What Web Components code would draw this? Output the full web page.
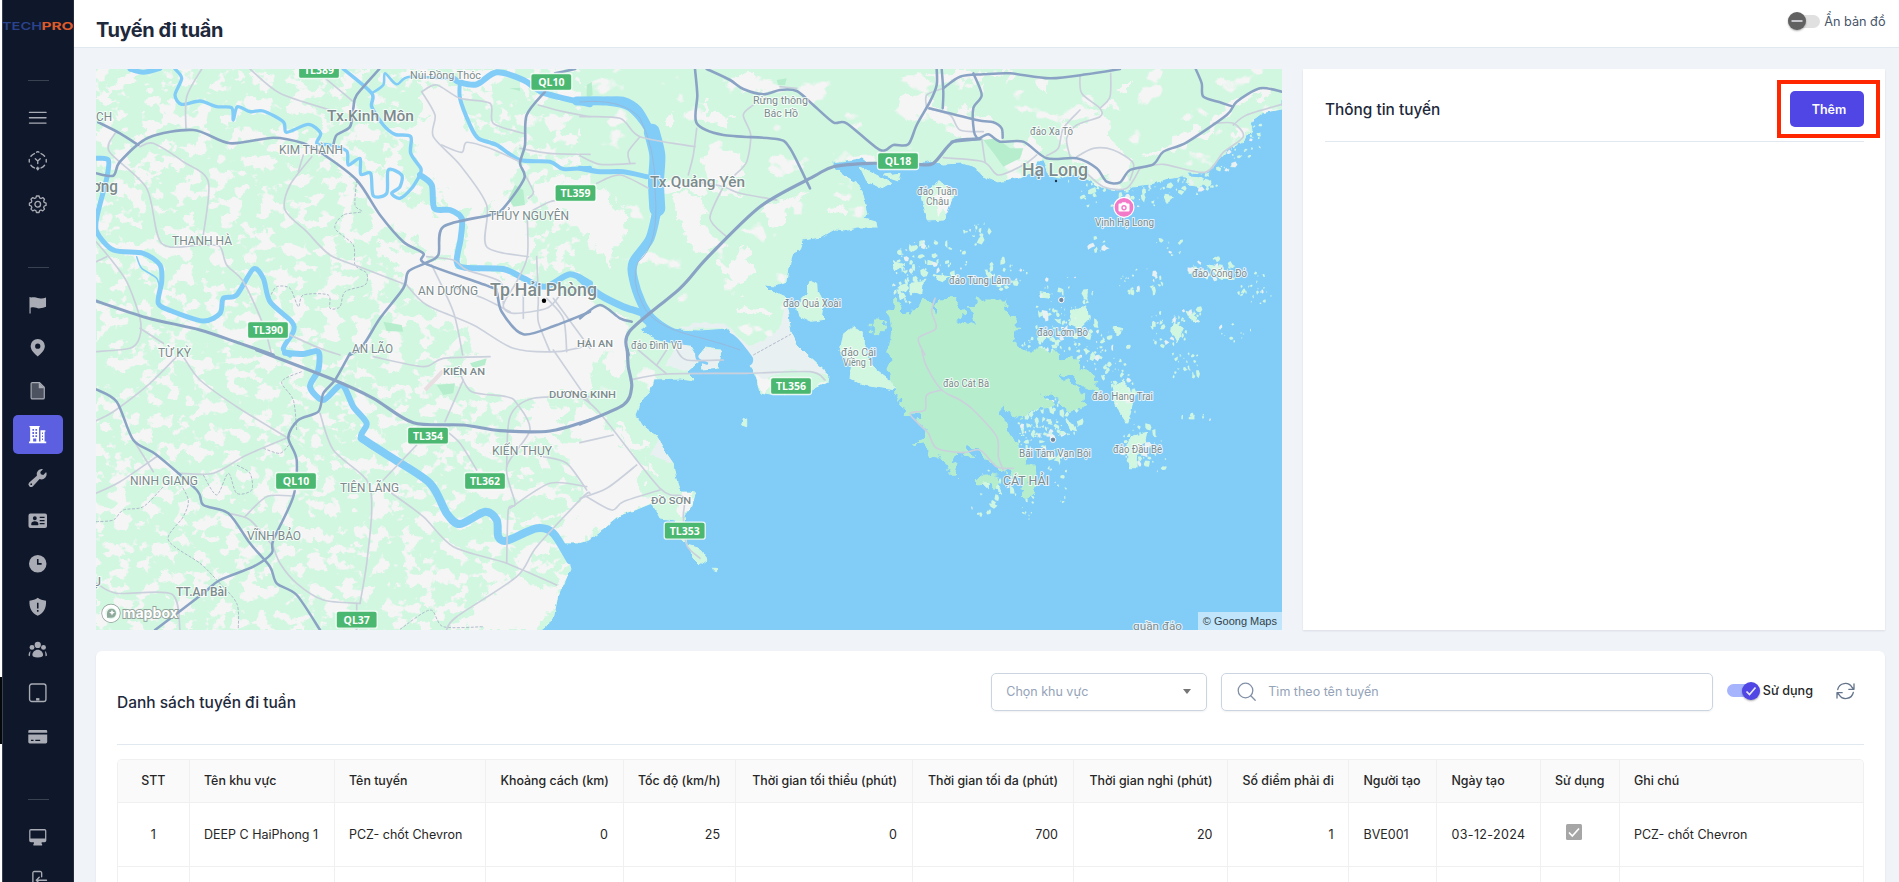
<!DOCTYPE html>
<html lang="vi">
<head>
<meta charset="utf-8">
<title>Tuyến đi tuần</title>
<style>
html,body{margin:0;height:100%;overflow:hidden;background:#f0f4f9;font-family:Inter,"Noto Sans",sans-serif;color:#1e293b}
</style>
</head>
<body>
<patrol-app></patrol-app>
<script>
const define=(name,html,setup)=>{
  const t=document.createElement('template');t.innerHTML=html;
  customElements.define(name,class extends HTMLElement{
    constructor(){super();this.attachShadow({mode:'open'}).append(t.content.cloneNode(true));}
    connectedCallback(){if(setup&&!this.ready){this.ready=true;setup(this,this.shadowRoot);}}
  });
};

/* ---------- sidebar ---------- */
const ICONS={
  menu:'<path d="M1.500 4.500h17M1.500 10h17M1.500 15.500h17" class="l"/>',
  scan:'<path d="M6.600 2.600A8 8 0 0 0 3 5.400M1.300 8.600v2.800M3 14.600a8 8 0 0 0 3.600 2.800M13.400 2.600A8 8 0 0 1 17 5.400M18.700 8.600v2.800M17 14.600a8 8 0 0 1-3.600 2.800M8.800 1.200L10 .6l1.200.6M8.800 17.600l1.200 1.600 1.200-1.600M10 16.600v2M7.500 8l2.500 2.200L12.500 8M10 10.200v2.600" class="l" stroke-width="1.500"/>',
  gear:'<path d="M10 1.500l1.400.2.600 2 1.500.7 1.900-1 1.900 1.900-.9 1.900.6 1.500 2 .7v2.400l-2 .7-.6 1.500.9 1.900-1.900 1.900-1.900-1-1.500.7-.6 2H8.600l-.6-2-1.500-.7-1.900 1-1.900-1.900.9-1.900L3 12.500l-2-.7V9.400l2-.7.6-1.500-.9-1.900 1.900-1.900 1.900 1L8 3.700l.600-2z" class="l" transform="translate(.5 -.6) scale(.95)"/><circle cx="10" cy="9.500" r="2.900" class="l"/>',
  flag:'<path d="M1.500 2v17h1.200v-5.800c4-1.600 6.300.9 9.500.5 2.500-.2 4.300-.9 6.300-1.600V2.600c-2.500 1-4.500 1.300-7 .8C8 2.600 5.500 1.600 2.700 2.800V2z"/>',
  pin:'<path fill-rule="evenodd" d="M10 1a7.300 7.300 0 0 0-7.300 7.300c0 4.500 4.500 8.500 7.300 10.700 2.800-2.200 7.300-6.200 7.300-10.700A7.300 7.300 0 0 0 10 1zm0 4.700a2.700 2.700 0 1 1 0 5.400 2.700 2.700 0 0 1 0-5.400z"/>',
  file:'<path d="M4.500 1.600h7.300L16.700 6.500v10.600a1.300 1.300 0 0 1-1.300 1.300H4.500a1.300 1.300 0 0 1-1.300-1.300V2.900a1.300 1.300 0 0 1 1.300-1.300z" fill-opacity=".4" stroke="currentColor" stroke-width="1.200"/><path d="M11 1.600v5.900h6z"/>',
  building:'<path fill-rule="evenodd" d="M1.500 1H12v1.300h-.7V17h1.500V5.500h5V7H17v10h1.700v1.600H1V17h1.200V2.300h-.7zM4.500 4v2h1.700V4zm3.100 0v2h1.700V4zM4.500 7.300v2h1.700v-2zm3.100 0v2h1.700v-2zM4.500 10.600v1.700h1.700v-1.700zm3.100 0v1.700h1.700v-1.700zM5.300 13.800V17h3.200v-3.200zm9.100-6v1.500h1V7.800zm0 3v1.500h1v-1.500zm0 3v1.500h1v-1.500z"/>',
  wrench:'<path fill-rule="evenodd" d="M18.600 4.200l-2.900 2.900-2.500-.6-.6-2.400 2.800-2.900a5.300 5.300 0 0 0-6.300 6.800L1.300 14.800a2.600 2.600 0 0 0 3.800 3.800l6.800-7.300a5.300 5.300 0 0 0 6.700-7.100zM3.300 15.700a.9.900 0 1 1 0 1.800.9.900 0 0 1 0-1.800z"/>',
  id:'<path fill-rule="evenodd" d="M2.500 2.500h15a2 2 0 0 1 2 2v11a2 2 0 0 1-2 2h-15a2 2 0 0 1-2-2v-11a2 2 0 0 1 2-2zM7 5.500a2 2 0 1 0 0 4 2 2 0 0 0 0-4zM3.300 13.500c0 .7.300 1 1 1h5.400c.700 0 1-.3 1-1 0-1.900-1.600-2.900-3.700-2.900s-3.700 1-3.700 2.900zM12 6v1.300h5V6zm0 3.200v1.300h5V9.200zm0 3.200v1.300h5v-1.300z"/>',
  clock:'<path fill-rule="evenodd" d="M10 1a9 9 0 1 0 0 18 9 9 0 0 0 0-18zm-.8 4v5.900H14V9.300h-3.200V5z"/>',
  shield:'<path fill-rule="evenodd" d="M10 .8c2.500 1.900 5 2.700 8.500 3 .5 8-2.800 13-8.500 15.400C4.300 16.800 1 11.800 1.500 3.800 5 3.500 7.500 2.700 10 .8zM9.200 6v5.800h1.600V6zm0 7.300V15h1.600v-1.700z"/>',
  users:'<circle cx="10" cy="5" r="3.200"/><circle cx="4.100" cy="7.600" r="2.500"/><circle cx="15.900" cy="7.600" r="2.500"/><path d="M4.500 15.500c0-3 2.400-5.500 5.500-5.500s5.500 2.500 5.500 5.500c0 1.700-1.600 2.500-5.500 2.500s-5.500-.8-5.500-2.500zM2.600 11.300c-1.300.8-2 2.600-2 4.300 0 .5.500.9 1.400 1 .1-2 .3-3.600.6-5.300zM17.400 11.300c1.300.8 2 2.600 2 4.300 0 .5-.5.900-1.400 1-.1-2-.3-3.600-.6-5.300z"/>',
  tablet:'<rect x="1.600" y="1" width="16.800" height="18" rx="2.300" class="l" stroke-width="1.600"/><path d="M8.300 15.500h3.400V18H8.300z"/>',
  card:'<path d="M1.500 3h17a1.200 1.200 0 0 1 1.200 1.200V6H.3V4.200A1.200 1.200 0 0 1 1.500 3z"/><path fill-rule="evenodd" d="M.3 7.800h19.400v7.500a1.500 1.500 0 0 1-1.500 1.500H1.800a1.500 1.500 0 0 1-1.500-1.500zM3 13.200v1.200h2.700v-1.200zm4.500 0v1.200h5v-1.200z"/>',
  monitor:'<path transform="translate(0 .6)" fill-rule="evenodd" d="M3 1.500h14a1.800 1.800 0 0 1 1.800 1.800v10a1.800 1.800 0 0 1-1.800 1.800h-3v1.800h.5v1.600h-9v-1.600H6v-1.800H3a1.800 1.800 0 0 1-1.800-1.800v-10A1.800 1.800 0 0 1 3 1.500zm-.5 1.600v8.200h15V3.100z"/>',
  exit:'<path d="M14 7V3a1.500 1.500 0 0 0-1.500-1.500h-6A1.500 1.500 0 0 0 5 3v15M19 10.500H8.500l3-3M8.500 10.500l3 3" class="l" stroke-width="1.600"/>'
};
define('nav-item',`<style>
:host{display:flex;align-items:center;justify-content:center;width:50px;height:39px;margin:0 auto 4.150px;border-radius:5px;color:#a9acb4;flex:none}
:host([active]){background:#5b5fe0;color:#fff}
svg{width:19.500px;height:19.500px;fill:currentColor;overflow:visible}
.l{fill:none;stroke:currentColor;stroke-width:1.400;stroke-linecap:round;stroke-linejoin:round}
</style><svg viewBox="0 0 20 20"></svg>`,(el,r)=>{r.querySelector('svg').innerHTML=ICONS[el.getAttribute('icon')];});

define('side-bar',`<style>
:host{display:flex;flex-direction:column;box-sizing:border-box;width:74px;height:882px;background:#0f172a;border-left:2px solid #fff;overflow:hidden;flex:none;box-shadow:inset 1px 0 #3a4050,inset -1px 0 #262c3c;position:relative}
.logo{display:block;width:72px;height:14px;margin-top:19px;flex:none}
hr{width:21px;border:0;height:1px;background:#3a4150;margin:0 auto;flex:none}
.gap{flex:none}
</style>
<svg class="logo" viewBox="0 0 72 14"><text x="0" y="11" font-size="11" font-weight="600" font-family="Inter" fill="#2b438c" textLength="40" lengthAdjust="spacingAndGlyphs">TECH</text><text x="39.500" y="11" font-size="11" font-weight="700" font-family="Inter" fill="#dd5a2b" textLength="32" lengthAdjust="spacingAndGlyphs">PRO</text></svg>
<hr style="margin-top:47px">
<div class="gap" style="height:17.500px"></div>
<nav-item icon="menu"></nav-item><nav-item icon="scan"></nav-item><nav-item icon="gear"></nav-item>
<hr style="margin-top:39px">
<div class="gap" style="height:17.500px"></div>
<nav-item icon="flag"></nav-item><nav-item icon="pin"></nav-item><nav-item icon="file"></nav-item><nav-item icon="building" active></nav-item><nav-item icon="wrench"></nav-item><nav-item icon="id"></nav-item><nav-item icon="clock"></nav-item><nav-item icon="shield"></nav-item><nav-item icon="users"></nav-item><nav-item icon="tablet"></nav-item><nav-item icon="card"></nav-item>
<hr style="margin-top:39px">
<div class="gap" style="height:17.500px"></div>
<nav-item icon="monitor"></nav-item><nav-item icon="exit"></nav-item>`);

/* ---------- switch ---------- */
define('toggle-switch',`<style>
:host{display:flex;align-items:center;gap:4px;font-size:13px;--thumb:#616161;--track:#e0e0e0}
:host([on]){--thumb:#4f46e5;--track:#a5b4fc}
.t{width:32px;height:18px;display:flex;align-items:center;position:relative}
.t::before{content:"";flex:1;height:13px;border-radius:7px;background:var(--track)}
svg{position:absolute;left:0;top:0;width:18px;height:18px;border-radius:50%;background:var(--thumb);box-shadow:0 1px 2px #0005}
:host([on]) svg{left:15px}
path{fill:none;stroke:#e8e8f0;stroke-width:1.700}
.c{display:none}:host([on]) .c{display:block}:host([on]) .m{display:none}
</style><div class="t"><svg viewBox="0 0 18 18"><path class="m" d="M3.500 9h11"/><path class="c" d="M4.500 9.500l3 3 6-7"/></svg></div><slot></slot>`);

define('page-header',`<style>
:host{display:flex;flex:none;box-sizing:border-box;height:48px;background:#fff;border-bottom:1px solid #e2e8f0;padding:0 13.500px 0 22px;justify-content:space-between}
h1{margin:15px 0 0;font-size:20px;line-height:30px;font-weight:700;letter-spacing:-.42px;color:#1e293b;white-space:nowrap}
toggle-switch{height:42px;color:#475569;gap:4px;font-size:12.700px}
</style><h1><slot></slot></h1><toggle-switch>Ẩn bản đồ</toggle-switch>`);

/* ---------- map ---------- */
const ORIGIN={A:[90,65],B:[90,350],C:[580,65],D:[580,350],E:[900,65],F:[900,350]};
const pts=(k,s)=>s.trim().split(/\s+/).map(p=>p.split(',').map(Number)).map(([x,y])=>[ORIGIN[k][0]+x/3,ORIGIN[k][1]+y/3]);
const curve=p=>{
  let d='M'+p[0].map(n=>n.toFixed(1));
  for(let i=0;i<p.length-1;i++){
    const a=p[i-1]||p[i],b=p[i],c=p[i+1],e=p[i+2]||c,q=7;
    d+='C'+[b[0]+(c[0]-a[0])/q,b[1]+(c[1]-a[1])/q,c[0]-(e[0]-b[0])/q,c[1]-(e[1]-b[1])/q,c[0],c[1]].map(n=>n.toFixed(1)).join(' ');
  }
  return d;
};
const lines=(list,attrs)=>list.map(([k,s,w])=>s.split('|').map(x=>`<path d="${curve(pts(k,x))}" ${attrs} ${w?`stroke-width="${w}"`:''}/>`).join('')).join('');
const areas=(list,attrs)=>list.map(([k,s])=>s.split('|').map(x=>`<polygon points="${pts(k,x).map(p=>p.map(n=>n.toFixed(1))).join(' ')}" ${attrs}/>`).join('')).join('');

const LAND='96,69 1282,69 1282,109 1262,113 1250,122 1252,130 1243,142 1230,148 1217,162 1205,173 1187,172 1180,177 1165,179 1150,185 1133,187 1127,191 1103,188 1085,178 1074,174 1060,178 1050,176 1044,160 1038,160 1034,172 1020,178 997,182 983,176 975,167 962,163 943,164 930,160 913,165 896,167 884,160 868,163 862,158 833,162 833,166 847,178 858,184 862,195 867,213 864,218 877,221 878,228 857,228 848,230 834,229 820,237 803,240 800,250 793,253 790,262 787,282 776,286 765,285 772,292 785,298 788,315 791,332 797,345 807,355 818,365 829,375 828,382 813,389 790,392 770,395 760,393 757,380 753,370 743,356 735,340 727,328 700,330 677,329 650,322 640,330 655,340 667,343 690,346 697,358 705,348 720,350 718,368 702,370 701,360 696,364 687,372 695,380 680,378 653,379 650,390 640,405 636,415 642,425 656,436 664,450 673,463 676,480 680,492 690,492 695,493 692,505 684,517 688,545 698,548 707,560 700,565 693,558 690,548 682,540 675,520 660,518 652,503 635,510 620,515 600,532 590,540 578,543 563,543 571,568 565,582 557,600 553,620 540,630 96,630';
const URBAN=[
 ['A','870,530 960,570 1100,600 1240,640 1380,680 1500,690 1500,870 1150,870 1130,790 1040,740 1000,720 950,640 930,600 880,575|850,400 920,410 1030,440 1100,470 1095,580 1000,545 900,470|990,60 1110,100 1150,220 1280,290 1240,400 1190,430 1080,420 1035,340 990,300 960,210 1020,150|1200,450 1300,440 1320,560 1280,600 1130,595 1130,480|700,260 860,330 960,340 870,450 800,350|1110,12 1220,15 1200,80 1130,70|1330,360 1500,330 1500,470 1380,430'],
 ['B','1150,0 1500,0 1500,130 1270,145 1150,120 1110,70|1430,300 1500,285 1500,572 1425,577 1390,545 1480,440|1290,200 1420,180 1400,260 1270,280|1240,690 1390,720 1350,838 1120,838'],
 ['C','0,400 70,385 130,440 135,530 90,540 95,600 50,540 0,500|290,400 360,395 380,480 420,540 370,560 330,540|410,600 460,600 480,550 520,620 470,655 420,625|540,440 670,390 600,455 570,475|740,430 790,420 790,440|230,360 470,360 500,390 430,380 240,370|400,260 450,255 500,310 380,340 370,290|0,720 60,720 140,770 140,870 0,870|470,715 520,720 570,745 550,755 500,740|360,120 440,165 430,180 370,140|1180,20 1200,12 1200,60|245,170 275,155 270,180 255,185|450,45 540,40 560,80 500,70|945,110 1040,95 1030,140 980,140'],
 ['D','0,150 60,200 190,360 170,420 210,455 120,495 0,577|80,30 140,0 110,80 80,70|110,220 190,290 150,300|200,330 220,340 215,380|535,80 590,82 560,133 540,128|300,430 345,430 335,465 300,500|0,0 80,0 40,30 0,60'],
 ['E','0,105 80,90 100,130 200,150 310,190 320,225 240,222 150,180 60,135|480,200 600,150 660,270 700,300 650,350 600,330 500,260|340,235 380,235 430,280 400,300|420,60 450,55 430,75|660,60 690,55 680,70|80,50 180,20 330,30 180,45|730,270 850,230 1000,110 1110,75 990,145 850,245|640,110 670,125 620,125']
];
const RIVERS=[
 ['A','120,12 160,22 210,10',5],
 ['A','255,12 275,40 255,90 275,118 330,108 380,125 425,128 430,165 442,125 480,140 520,138 580,170 590,202 655,178 692,205 680,235 720,240 770,258 775,300 810,280 812,328 842,325 850,392 890,385 895,315 935,330 930,365 905,385 930,400 965,370 990,330',3.3],
 ['A','760,12 845,85 845,125 880,180 915,208 962,215 962,265 992,310 990,330',3.5],
 ['A','990,330 1025,360 1033,430 1080,435 1115,460 1112,520 1100,590 1125,608 1240,612 1300,640 1365,665 1440,628 1500,655',6],
 ['C','0,640 60,690 130,725 200,750 280,800 420,830',7],
 ['A','845,85 880,60 885,25 920,58 960,35 1110,45',2.5],
 ['A','1090,40 1110,52 1160,58 1220,22 1300,45 1365,85 1500,118',6],
 ['C','-10,108 80,108 150,125 205,190 225,270',9],['C','75,100 130,100 180,130 215,190',3],
 ['C','215,200 232,270 228,350 232,430',16],['C','232,430 210,520 160,590 160,640 185,715 220,770',9],
 ['C','200,755 260,805 330,822 440,820 500,885',13],
 ['A','1110,50 1110,100 1140,180 1165,220 1220,240 1290,285 1380,290 1420,312 1500,308',4],
 ['C','0,310 60,320 130,320 200,335',5],
 ['A','18,280 55,285 50,340 22,450 20,500 70,555 160,565 210,600 215,650 205,715 250,740 340,768 390,745 400,700 440,690 490,612 520,640 540,710 605,770 610,800 580,850 600,870',5],
 ['A','140,575 155,610 200,640 210,680',1.5],
 ['B','585,8 640,12 685,5 685,60 660,110 700,150 755,105 790,170 830,220 815,265 900,320',6],
 ['B','815,265 900,320 1020,400 1070,490 1110,522 1185,485 1220,510 1225,560 1250,572 1340,535 1390,550 1440,630',8],
 ['D','350,-20 352,25 380,40',3]
];
const MAJOR=[
 ['A','18,325 70,332 90,290 175,218 310,195 420,235 550,218 640,235 700,268 800,345 870,450 940,530 1000,565 1005,595 1200,665 1220,680 1235,740 1300,808 1400,780 1500,740|25,172 90,205 145,240|868,12 800,90 790,130 780,185 740,210 730,240|1365,80 1310,150 1305,240 1290,295 1303,340 1240,430 1200,450 1060,485 1045,570 1005,595 955,620 940,670 870,760 820,840 780,870|1455,12 1395,25',2.6],
 ['A','18,708 170,758 330,795 450,835 550,870',3],
 ['B','780,10 735,90 700,130 685,185 625,210 595,262 620,330 610,440 550,570 545,610 490,650 390,690 340,730 195,840|18,118 80,155 130,270 200,315 320,420 340,465 415,490 480,580 540,650 560,700 620,735 690,840',2.5],
 ['B','500,0 720,85 850,145 970,218 1120,225 1230,242 1380,243 1500,210',3.2],
 ['D','0,222 130,165 155,110 145,50 142,0',3.2],
 ['C','145,870 148,800 300,670 380,580 540,425 700,335 760,305 870,295 1010,298 1060,295 1120,230 1200,222',3.2],
 ['C','155,770 120,760 60,720 0,760|345,12 352,90 350,175 430,210 590,222 630,250 690,370|380,12 450,45 490,72 550,88 600,75 650,78 700,120 760,172 800,175 900,255 940,240 985,238 1010,180 1050,110 1070,60 1070,12',2.6],
 ['E','125,12 130,80 128,130|88,130 230,165 280,172 305,190 308,218|130,70 180,35 250,28 330,25 450,40 560,28 660,12|220,25 245,90 220,130 222,200 232,220|155,230 230,222 265,208 300,230 370,230 440,280 530,280 590,310 620,350 660,352 690,315 760,298 790,260 860,232 980,150 1010,110 1080,70 1146,80|887,12 905,55 910,95 960,112 998,125',2.5]
];
const MINOR=[
 ['A','335,12 290,95 288,195|480,12 570,85 720,135|700,35 790,110|75,205 58,260 170,370 215,535 340,540 390,545 410,600 460,650 520,780 545,870|150,245 190,235 280,290 355,350 340,510|18,530 60,580 110,650 150,760 148,820 120,850 18,860|18,590 50,575|150,790 220,835|665,275 600,360 585,435 650,500 720,570 820,610 950,660|640,270 625,320|995,80 1035,150 1030,215 1110,300 1190,420 1190,545 1315,575|1315,400 1330,380 1300,320|995,80 1040,60 1110,100 1200,115 1210,175 1300,205|1055,240 1115,262 1130,232 1200,250 1290,290|1290,250 1380,265 1500,268|1345,120 1420,140 1500,155|600,810 690,850 750,870|1025,600 1090,740 1118,870|1330,435 1380,410 1420,405'],
 ['A','950,660 1010,720 1150,780 1270,850 1400,860 1500,840|1010,575 1090,585 1130,615 1230,650 1240,715|1312,460 1312,575 1280,650 1240,720 1270,745 1370,730 1410,690|1340,575 1345,700 1345,770 1380,860|1370,700 1420,760 1430,860|1390,700 1500,850|1100,670 1180,700 1260,740|1300,690 1300,760',2.4],
 ['B','280,20 330,90 440,170 595,265|265,15 180,100 70,185 18,212|130,270 190,365|18,430 90,395 200,320|270,370 370,370 470,315 600,260|690,190 730,300 830,390 845,480 830,640 810,760|880,390 980,285|905,430 1000,500 1090,590 1250,640 1400,705|1250,640 1255,480 1275,460 1250,350 1320,240 1280,160 1250,140 1145,125 1110,70|1120,90 1065,215|1065,240 1110,280 1160,360|1250,350 1260,200 1330,145 1500,140|1260,475 1380,400 1490,410|1360,320 1430,340 1490,420|20,700 80,730 245,732 270,840|465,500 530,440 610,438|850,20 1000,50 1060,25 1200,20'],
 ['B','810,760 700,750 620,700 570,640 550,590|415,490 480,510 550,590|1070,838 1100,800 1280,680 1340,590 1480,440 1500,430|1390,0 1500,160|800,760 800,840',2.8],
 ['D','0,140 60,190 240,415 310,440 310,500 320,585 360,625|170,345 80,415 0,445|150,90 260,72 500,70 690,65 735,90',2.8],
 ['D','0,278 100,255|20,440 95,480 130,455 240,420|175,0 260,72 |290,0 320,30 430,30|230,45 260,0'],
 ['C','0,155 120,160 180,215 345,245|350,190 340,270 325,330|430,365 390,460 440,515|520,120 490,150 512,210 500,290 465,330|180,215 145,260 150,295|0,272 60,298 165,295|50,355 120,330 205,370|600,65 650,70'],
 ['C','350,350 430,365 480,385 590,405',2.6],
 ['E','80,130 150,150 180,195 250,200|540,30 545,85 600,130 600,155 530,180 500,220 510,275|632,25 630,95 600,130|540,135 490,190 475,250 440,272|530,275 580,250 640,255 700,295 690,345|245,220 255,290|720,310 790,298 915,322 970,262 1030,215 1000,175 940,175|1000,180 1040,150 1146,118|130,70 80,90 80,130'],
 ['E','130,278 250,290 295,330 370,300 410,270|555,320 610,365 680,370 720,310',2.8],
 ['E','105,700 95,740 108,790 55,820 75,870'],
 ['F','65,0 80,50 125,120 180,150 220,180 290,260 295,320 310,360|125,120 80,135 75,180 30,190 55,220 85,250 110,295 190,308 240,300 290,350 340,355']
];
const DASHED=[
 ['A','800,345 795,420 815,440 760,450 735,490 790,540 795,600 830,625 825,660 765,680 750,725 720,730 715,690 640,690 625,725 600,670 560,665 540,695'],
 ['B','635,65 575,95 610,150 620,240|18,515 70,510 100,480 160,470 220,410|265,390 295,450 280,500 235,570 330,640 380,690 440,760 445,838|340,375 380,435 415,370 440,430 485,420 480,370 440,345|520,295 570,310 600,280|930,838 1020,780 1060,830 1180,830'],
 ['C','520,870 632,808']
];
const FOREST=[
 ['E','-18,710 30,745 75,705 105,745 120,705 145,700 180,705 190,750 175,760 235,785 205,730 250,705 310,705 320,730 350,770 340,830 360,870 400,870 420,900 440,1010 460,1020 430,1030 370,1050 340,1060 315,1030 300,1005 305,1060 330,1100 365,1150 375,1200 405,1200 410,1260 385,1300 355,1290 380,1250 330,1220 290,1205 260,1180 240,1155 205,1150 215,1180 190,1165 170,1170 160,1200 175,1245 150,1220 130,1180 95,1170 50,1130 75,1100 60,1060 25,1045 -20,970 -30,930 -35,870 -25,800 -30,750'],
 ['F','350,0 470,0 480,25 530,30 535,60 590,70 595,110 600,125 540,110 530,80 480,70 490,95 530,110 555,170 510,190 470,140 430,120 425,70 400,50 370,40|230,380 290,375 295,400 270,410 240,400'],
 ['C','880,765 920,765 905,800 880,800']
];
const WOODS=[
 ['E','250,225 290,220 330,250 370,250 360,280 310,305 285,270'],
 ['A','1255,400 1275,360 1300,375 1305,420 1270,425|880,770 935,780 940,800 890,798|1258,70 1290,68 1290,78'],
 ['B','1040,105 1095,100 1090,130 1060,135|1140,40 1190,25 1185,45 1150,55'],
 ['C','20,60 35,50 38,90 20,100|590,45 620,40 615,60 595,60']
];
const ISLES=[
 ['C','840,305 870,320 935,355 905,372 860,348|910,330 960,325 955,345|1025,400 1045,370 1080,350 1125,385 1100,430 1095,465 1045,468|690,645 710,655 712,680 730,715 725,750 735,765 695,772 660,755 650,720 680,690|790,810 820,785 850,800 850,840 865,870 870,900 930,945 945,975 850,960 810,940 815,900 780,860|940,590 975,600 950,615|990,655 1030,650 1025,690 990,680|1060,630 1110,635 1090,650'],
 ['D','490,205 500,210 500,230 485,225|398,655 410,655 410,665 400,663'],
 ['F','640,110 670,95 690,110 700,150 690,190 680,220 660,190 645,155|690,260 740,250 735,275 710,300 708,350 690,350 680,300|500,205 525,230 530,245 510,240|270,390 285,390 305,430 290,420|240,395 265,400 265,420'],
 ['E','420,680 450,685 445,700 425,695|510,740 550,725 570,760 540,790 510,780|820,770 850,790 830,830 815,800|920,600 960,605 1000,640 960,640|860,335 910,340 900,365 870,360|790,390 820,395 800,412|855,735 890,755 885,770 865,755|640,785 665,790 660,805 640,800']
];
/* islet fields: centre x, centre y, radius x, radius y, count */
const CLUSTERS=[[930,262,38,22,70],[905,285,12,20,26],[978,234,14,12,18],[1005,275,22,16,26],[1065,300,30,25,36],[1065,330,34,24,70],[1040,350,22,16,44],[1085,190,22,16,14],[1150,190,25,14,24],[1195,182,25,12,38],[1245,135,18,24,38],[1225,160,16,12,20],[1130,205,30,10,10],[1100,245,12,10,9],[1170,248,18,9,10],[1140,282,24,14,24],[1215,270,28,13,40],[1255,290,18,18,26],[1170,328,22,20,36],[1190,315,12,9,10],[1235,332,16,10,10],[1185,365,16,18,24],[1195,418,16,7,7],[1115,375,14,18,28],[1128,400,12,22,20],[1140,442,22,24,42],[1160,465,10,8,5],[1050,418,34,22,90],[1035,435,18,15,30],[1050,455,14,15,16],[1062,485,8,18,9],[1000,475,18,20,20],[985,505,16,13,9],[1025,505,14,15,11],[945,448,14,18,14],[1110,345,24,14,14],[1093,360,20,20,18]];
let seed=7;const rnd=()=>(seed=(seed*16807)%2147483647)/2147483647;
const islets=()=>CLUSTERS.map(([cx,cy,rx,ry,n])=>{
  let s='';
  for(let i=0;i<n;i++){
    const t=rnd()*6.283,q=Math.sqrt(rnd()),x=cx+Math.cos(t)*q*rx,y=cy+Math.sin(t)*q*ry,z=.8+rnd()*rnd()*4.6,m=5+Math.floor(rnd()*3),g=.4+rnd()*.9;
    let p='';for(let j=0;j<m;j++){const a=j/m*6.283,l=z*(.35+rnd()*.9);p+=(x+Math.cos(a)*l*g).toFixed(1)+','+(y+Math.sin(a)*l).toFixed(1)+' ';}
    s+=`<polygon points="${p}" fill="${rnd()>.15?'#cff6e0':'#e9f1f3'}"/>`;
  }
  return s;}).join('');
const LABELS=[
 ['CH',96,121,16,12],['Tx.Kinh Môn',327,121,87,15.5,1],['KIM THÀNH',279,153.500,64,12],['ơng',92,191.500,26,17,1],['THANH HÀ',172,245,60,12],['TỪ KỲ',158,357,33,12],['AN DƯƠNG',418,294.500,60,12],['Tp.Hải Phòng',490,295.500,107,18,1],['AN LÃO',352,353,41,12],['THỦY NGUYÊN',489,220,80,12],['Núi Đồng Thóc',410,79,71,10.5],['KIẾN AN',443,375,42,9.5,1],['DƯƠNG KINH',549,397.500,67,9.5,1],['KIẾN THỤY',492,455,60,12],['TIÊN LÃNG',340,492,59,12],['NINH GIANG',130,485,68,12],['VĨNH BẢO',247,540,54,12],['TT.An Bài',176,596,51,12,1],['Ụ',92,586,9,12],['HẢI AN',577,347,36,9.5,1],['đảo Đình Vũ',631,349,51,10],['Rừng thông',753,104,55,10.5],['Bác Hồ',764,117,34,10.5],['Tx.Quảng Yên',650,186.500,95,15.5,1],['đảo Quả Xoài',783,307,58,10],['đảo Tuần',917,195,40,10],['Châu',926,205,23,10],['Hạ Long',1022,176,66,18,1],['đảo Xa Tô',1030,135,43,10],['Vịnh Hạ Long',1095,225.500,59,10.5],['đảo Cống Đỏ',1192,277,55,10],['đảo Tùng Lâm',949,284,61,10],['đảo Lờm Bò',1037,336,51,10],['đảo Cái',841,356,35,10],['Viềng 1',843,366,30,10],['đảo Cát Bà',943,387,46,10],['đảo Hang Trai',1092,399.500,61,10],['đảo Đầu Bê',1113,452.500,49,10],['Bãi Tắm Vạn Bội',1019,457,72,10],['CÁT HẢI',1003,485,46,12],['ĐỒ SƠN',651,503.500,40,9.5,1],['quần đảo',1133,630,49,11]
];
const SHIELDS=[['TL389',319,70],['QL10',551.300,82],['TL359',575.500,193],['TL390',268,330],['TL354',428,435.700],['QL10',296,481],['TL362',485,481],['QL37',356.700,619.700],['QL18',898,161],['TL356',791,386],['TL353',684.700,530.700]];

define('map-view',`<style>
:host{display:block;position:relative;overflow:hidden;background:#82ccf8}
svg{display:block;width:100%;height:100%}
.credit{position:absolute;right:0;bottom:0;height:18px;padding:0 5px;background:#ffffff80;font:11px/18px "Liberation Sans",Arial,sans-serif;color:#333f48;white-space:nowrap}
text{font-family:Roboto,sans-serif}
.lb{fill:#7c8b8d;stroke:#fff;stroke-opacity:.8;stroke-width:2px;paint-order:stroke;stroke-linejoin:round}
.sh{fill:#fff;font:700 10.500px "Open Sans",sans-serif;text-anchor:middle}
</style><svg viewBox="96 69 1186 561" preserveAspectRatio="none"></svg><div class="credit">© Goong Maps</div>`,(el,r)=>{
  const noise=(id,f,cut,s)=>`<filter id="${id}" x="0" y="0" width="100%" height="100%" color-interpolation-filters="sRGB"><feTurbulence type="fractalNoise" baseFrequency="${f}" numOctaves="3" seed="${s}"/><feColorMatrix values="0 0 0 0 .961  0 0 0 0 .961  0 0 0 0 .961  18 0 0 0 ${-18*cut}"/></filter>`;
  const rough=(id,f,k,s)=>`<filter id="${id}" filterUnits="userSpaceOnUse" x="86" y="59" width="1206" height="581" color-interpolation-filters="sRGB"><feTurbulence type="fractalNoise" baseFrequency="${f}" numOctaves="2" seed="${s}"/><feDisplacementMap in="SourceGraphic" scale="${k}" xChannelSelector="R" yChannelSelector="G"/></filter>`;
  r.querySelector('svg').innerHTML=`<defs>${noise('dense','.062 .07',.525,11)}${noise('sparse','.03 .04',.66,5)}${rough('coast','.12',5,3)}${rough('jag','.11',16,8)}${rough('town','.07',26,4)}<clipPath id="land"><polygon points="${LAND}"/></clipPath></defs>
  <g filter="url(#coast)">
  <polygon points="${LAND}" fill="#d2f7e1" stroke="#d2f7e1"/>
  <path d="M80 55H1300V100H1282V69H96V630H540V645H80z" fill="#d2f7e1"/>
  <g clip-path="url(#land)">
   <rect x="96" y="69" width="484" height="561" filter="url(#dense)"/>
   <rect x="580" y="69" width="702" height="340" filter="url(#sparse)"/>
   <g filter="url(#town)">${areas(URBAN,'fill="#f5f5f5" stroke="#f5f5f5" stroke-width="3" stroke-linejoin="round"')}</g>
   <path d="M677 329L700 322 725 324 750 347 780 330 785 305 807 355 829 375 813 372 790 369 762 380 750 370 727 328zM660 436L650 455 673 463z" fill="#e9f0f1"/>
   <path d="M677 345L720 350 718 368 688 372 665 366z" fill="#e9f0f1"/>
  </g></g>
  ${areas(WOODS,'fill="#b6eecd"')}
  <g filter="url(#coast)">${areas(ISLES,'fill="#d2f7e1" stroke="#d2f7e1" stroke-width="1" stroke-linejoin="round"')}
  <path d="M935 196l14-8 2 14-4 12-3-6-6 8z" fill="#f5f5f5"/></g>
  ${islets()}
  <g filter="url(#jag)">${areas(FOREST,'fill="#b6eecd" stroke="#b6eecd" stroke-width="1" stroke-linejoin="round"')}</g>
  <g fill="none" stroke-linecap="round" stroke-linejoin="round">
   ${lines(RIVERS,'stroke="#82ccf8"')}
   ${lines(DASHED,'stroke="#a9b6c6" stroke-width=".9" stroke-dasharray="3 1.500" stroke-linecap="butt"')}
   <path d="M580 102Q622 98 640 118Q656 150 655 190Q660 245 638 262Q630 280 643 305Q652 325 690 335T740 350" stroke="#9ab4d4" stroke-width=".8"/>
   <path d="M425 390L443 371" stroke="#e8dfe2" stroke-width="4" stroke-linecap="butt"/>
   ${lines(MINOR,'stroke="#cbd1dc" stroke-width="1.700"')}
   ${lines(MAJOR,'stroke="#8aa3c4"')}
  </g>
  <circle cx="544" cy="300.700" r="2.200"/><circle cx="1056" cy="181" r="1.200" fill="#234"/>
  <circle cx="1061.300" cy="300" r="2.700" fill="#7189a0" stroke="#fff" stroke-width="1"/><circle cx="1053" cy="439.700" r="2.700" fill="#7189a0" stroke="#fff" stroke-width="1"/>
  <circle cx="1124" cy="207.300" r="10" fill="#f27ac9" stroke="#fff" stroke-width="1.200"/>
  <path fill-rule="evenodd" d="M1119.500 203.500h1.700l1-1.300h3.600l1 1.300h1.700q1 0 1 1v6q0 1-1 1h-9q-1 0-1-1v-6q0-1 1-1zM1124 205a2.700 2.700 0 1 0 0 5.400 2.700 2.700 0 0 0 0-5.400zm0 1.400a1.300 1.300 0 1 1 0 2.600 1.300 1.300 0 0 1 0-2.600z" fill="#fff"/>
  ${LABELS.map(([t,x,y,w,s,b])=>`<text class="lb" x="${x}" y="${y}" textLength="${w}" lengthAdjust="spacingAndGlyphs" font-size="${s}" font-weight="${b?500:400}">${t}</text>`).join('')}
  ${SHIELDS.map(([t,x,y])=>`<rect x="${x-20.500}" y="${y-8.500}" width="41" height="17" rx="2.500" fill="#4ab870" stroke="#fff" stroke-width="1.300" stroke-opacity=".85"/><text class="sh" x="${x}" y="${y+4}">${t}</text>`).join('')}
  <g><circle cx="111" cy="613.300" r="8.300" fill="#d2f7e1" fill-opacity=".4" stroke="#8b9c97" stroke-width="2.600"/><circle cx="111" cy="613.300" r="7.300" fill="none" stroke="#fff" stroke-width="3.200"/><path d="M107 617.800v-4.500a4.500 4.500 0 1 1 4.500 4.500z" fill="#8faa9d"/><path d="M112 609.800l.9 2 2 .9-2 .9-.9 2-.9-2-2-.9 2-.9z" fill="#fff"/>
  <text x="122.500" y="617.500" textLength="55.500" lengthAdjust="spacingAndGlyphs" style="font:700 14px Inter,sans-serif;fill:#fff;stroke:#94a59e;stroke-width:1.800;paint-order:stroke">mapbox</text></g>`;
});

/* ---------- right panel ---------- */
define('route-panel',`<style>
:host{display:block;box-sizing:border-box;background:#fff;padding:22px 21px 0 22px;box-shadow:0 1px 2px #0f172a1a}
.bar{display:flex;justify-content:space-between;align-items:center;height:36px;padding-bottom:14px;border-bottom:1px solid #e2e8f0}
h2{margin:0;font-size:15.400px;font-weight:500;color:#1e293b}
.b{position:relative}
button{display:block;width:74px;height:36px;border:0;border-radius:5px;background:#4f46e5;color:#fff;font:600 12.500px Inter,sans-serif;padding:0 0 0 4px}
.mark{position:absolute;left:-13px;top:-11px;width:95px;height:50px;border:4px solid #ff2600}
</style><div class="bar"><h2><slot></slot></h2><div class="b"><button>Thêm</button><div class="mark"></div></div></div>`);

/* ---------- list ---------- */
define('data-table',`<style>
:host{display:block}
table{width:1747px;table-layout:fixed;border-collapse:separate;border-spacing:0;border:1px solid #f0f0f0;border-bottom:0;border-radius:5px 5px 0 0;overflow:hidden;font-size:12.500px;color:#262626}
th,td{box-sizing:border-box;padding:0 14.500px;border-right:1px solid #f0f0f0;border-bottom:1px solid #f0f0f0;text-align:left;font-weight:400;white-space:nowrap}
th{height:43px;background:#fafafa;font-weight:500;font-size:12.400px;padding-bottom:1px}
td{height:64px}
th:last-child,td:last-child{border-right:0}
.r{text-align:right}.c{text-align:center}
.d{letter-spacing:.35px}
svg{display:block;width:16px;height:16px;margin:-6px 0 0 10.500px}
</style><table><colgroup></colgroup><thead><tr></tr></thead><tbody></tbody></table>`,(el,r)=>{
  const cols=[['STT',71.500,'c','1'],['Tên khu vực',145,'','DEEP C HaiPhong 1'],['Tên tuyến',151.500,'','PCZ- chốt Chevron'],['Khoảng cách (km)',137.500,'r','0'],['Tốc độ (km/h)',112,'r','25'],['Thời gian tối thiểu (phút)',177,'r','0'],['Thời gian tối đa (phút)',161,'r','700'],['Thời gian nghỉ (phút)',154.500,'r','20'],['Số điểm phải đi',121,'r','1'],['Người tạo',88,'','BVE001'],['Ngày tạo',103.500,'','<span class="d">03-12-2024</span>'],['Sử dụng',79,'','<svg viewBox="0 0 16 16"><rect width="16" height="16" rx="1.500" fill="#a6a6a6"/><path d="M3 8.500l3.300 3.500L13 4.500" fill="none" stroke="#fff" stroke-width="1.700"/></svg>'],['Ghi chú',243.500,'','PCZ- chốt Chevron']];
  r.querySelector('colgroup').innerHTML=cols.map(c=>`<col style="width:${c[1]}px">`).join('');
  r.querySelector('tr').innerHTML=cols.map(c=>`<th class="${c[2]}">${c[0]}</th>`).join('');
  r.querySelector('tbody').innerHTML=`<tr>${cols.map(c=>`<td class="${c[2]}">${c[3]}</td>`).join('')}</tr><tr>${cols.map(()=>'<td></td>').join('')}</tr>`;
});
define('route-list',`<style>
:host{display:block;box-sizing:border-box;background:#fff;border-radius:6px 6px 0 0;padding:22px 21px 0;box-shadow:0 1px 2px #0f172a1a}
.bar{display:flex;height:72px;border-bottom:1px solid #e2e8f0;box-sizing:border-box;width:1747px}
h2{margin:20px auto 0 0;font-size:15.500px;line-height:20px;font-weight:500;color:#1e293b}
.f{box-sizing:border-box;height:38px;border:1px solid #cbd5e1;border-radius:5px;display:flex;align-items:center;font-size:12.500px;color:#94a3b8;box-shadow:0 1px 2px #0f172a0f}
.s{width:216px;padding:0 15px 1px 14px;justify-content:space-between;margin-right:14px}
.s i{width:0;border:4.500px solid transparent;border-top:5px solid #757575;border-bottom:0}
.q{width:492px;padding:0 15px 1px;gap:12px;margin-right:14px}
.q svg{width:19px;height:19px}
toggle-switch{height:35px;color:#262626;font-weight:500;font-size:12.600px;gap:3.500px;margin-right:23px}
.rf{width:19px;height:18px;margin:9px 9px 0 0}
data-table{margin-top:14px}
</style>
<div class="bar"><h2><slot></slot></h2><div class="f s">Chọn khu vực<i></i></div>
<div class="f q"><svg viewBox="0 0 19 19" fill="none" stroke="#8290a6" stroke-width="1.300" stroke-linecap="round"><circle cx="8.500" cy="8.500" r="7.300"/><path d="M13.800 13.800l4.400 4.400"/></svg>Tìm theo tên tuyến</div>
<toggle-switch on>Sử dụng</toggle-switch>
<svg class="rf" viewBox="0 0 19 18" fill="none" stroke="#64748b" stroke-width="1.300" stroke-linecap="round" stroke-linejoin="round"><path d="M1.700 7.500A7.800 7.800 0 0 1 16 5.300l1.800 2M18 2v5.300h-5.200M17.300 10.500A7.800 7.800 0 0 1 3 12.700l-1.800-2M1 16v-5.300h5.200"/></svg></div>
<data-table></data-table>`);

define('patrol-app',`<style>
:host{display:flex;width:1899px;height:882px;overflow:hidden;background:#f0f4f9;position:relative}
main{flex:1;min-width:0;display:flex;flex-direction:column}
.row{display:flex;gap:21px;margin:21px 14px 21px 22px;height:561px;flex:none}
map-view{width:1186px;flex:none}
route-panel{flex:1}
route-list{margin:0 14px 0 22px;flex:none}
.edge{position:absolute;left:0;top:677px;width:2px;height:67px;background:#05080a}
</style>
<side-bar></side-bar><div class="edge"></div>
<main><page-header>Tuyến đi tuần</page-header>
<div class="row"><map-view></map-view><route-panel>Thông tin tuyến</route-panel></div>
<route-list>Danh sách tuyến đi tuần</route-list></main>`);
</script>
</body>
</html>
